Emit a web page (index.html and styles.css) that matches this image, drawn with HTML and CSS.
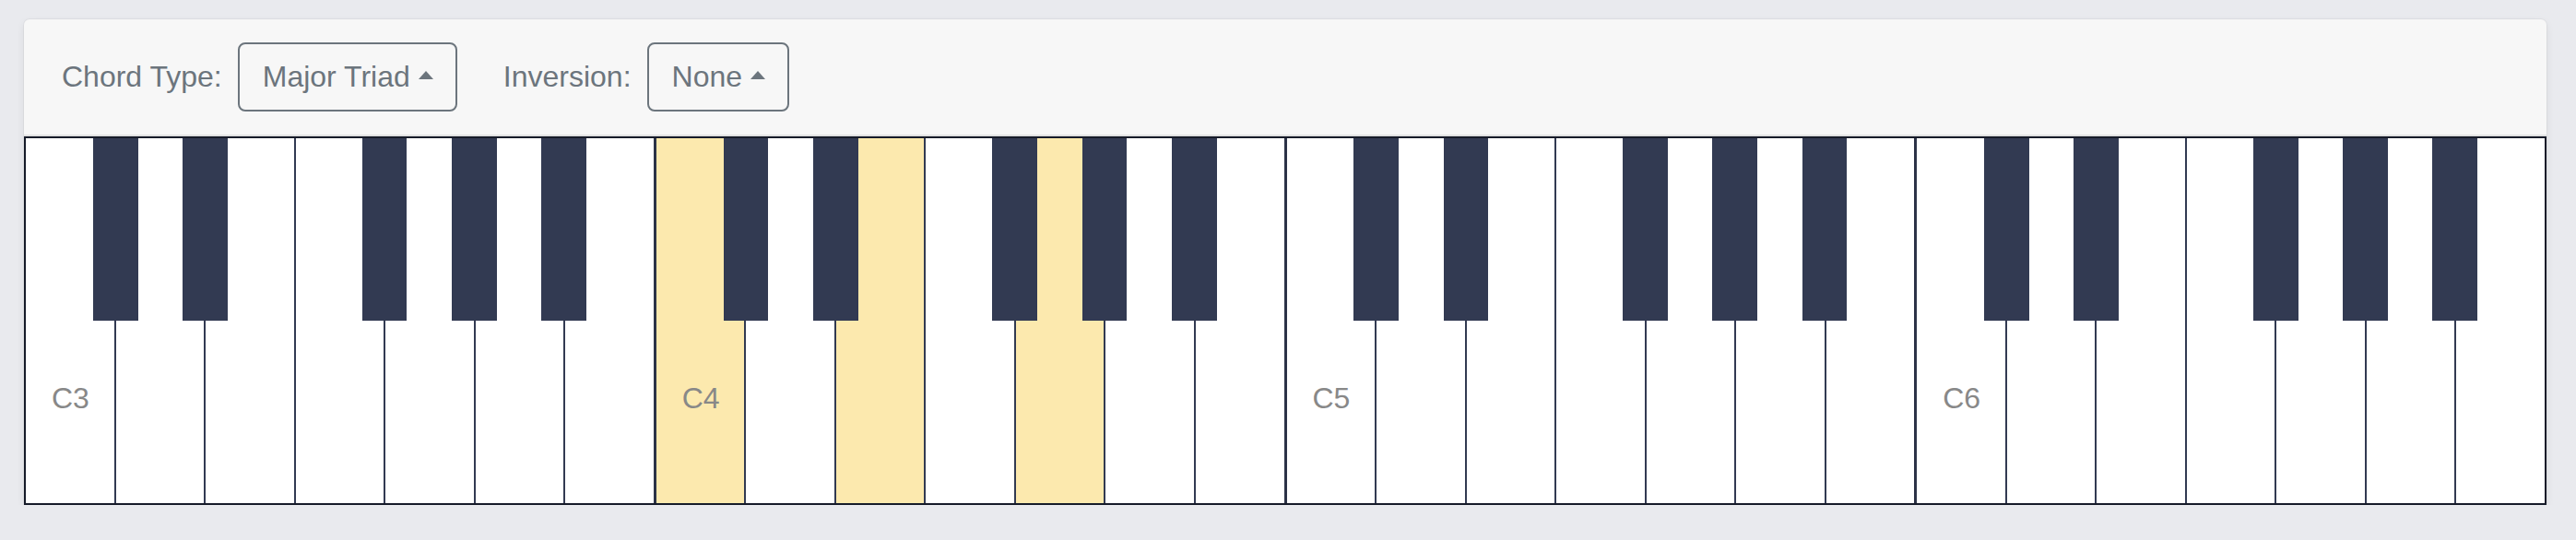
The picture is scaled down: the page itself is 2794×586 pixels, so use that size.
FILE: index.html
```html
<!DOCTYPE html>
<html lang="en">
<head>
<meta charset="utf-8">
<title>Chord Piano</title>
<link rel="stylesheet" href="styles.css">
</head>
<body>
<div class="card">
  <div class="toolbar">
    <span class="label">Chord Type:</span>
    <button class="select select-chord">Major Triad<span class="caret"></span></button>
    <span class="label label-gap">Inversion:</span>
    <button class="select">None<span class="caret"></span></button>
  </div>
  <div class="piano">
    <div class="octave">
      <div class="white"><span class="note">C3</span></div>
      <div class="white"></div>
      <div class="white"></div>
      <div class="white"></div>
      <div class="white"></div>
      <div class="white"></div>
      <div class="white"></div>
      <div class="black b1"></div><div class="black b2"></div><div class="black b4"></div><div class="black b5"></div><div class="black b6"></div>
    </div>
    <div class="octave">
      <div class="white on"><span class="note">C4</span></div>
      <div class="white"></div>
      <div class="white on"></div>
      <div class="white"></div>
      <div class="white on"></div>
      <div class="white"></div>
      <div class="white"></div>
      <div class="black b1"></div><div class="black b2"></div><div class="black b4"></div><div class="black b5"></div><div class="black b6"></div>
    </div>
    <div class="octave">
      <div class="white"><span class="note">C5</span></div>
      <div class="white"></div>
      <div class="white"></div>
      <div class="white"></div>
      <div class="white"></div>
      <div class="white"></div>
      <div class="white"></div>
      <div class="black b1"></div><div class="black b2"></div><div class="black b4"></div><div class="black b5"></div><div class="black b6"></div>
    </div>
    <div class="octave">
      <div class="white"><span class="note">C6</span></div>
      <div class="white"></div>
      <div class="white"></div>
      <div class="white"></div>
      <div class="white"></div>
      <div class="white"></div>
      <div class="white"></div>
      <div class="black b1"></div><div class="black b2"></div><div class="black b4"></div><div class="black b5"></div><div class="black b6"></div>
    </div>
  </div>
</div>
</body>
</html>
```
FILE: styles.css
```css
html, body {
  margin: 0;
  padding: 0;
  background: #e9eaee;
}
body {
  font-family: "Liberation Sans", Arial, sans-serif;
}
.card {
  margin: 21px 0 0 26px;
  width: 2736px;
  background: #f7f7f7;
  border-radius: 6px 6px 0 0;
  box-shadow: 0 0 0 1px rgba(0, 0, 0, 0.035), 0 3px 10px rgba(0, 0, 0, 0.07);
}
.toolbar {
  display: flex;
  align-items: center;
  padding: 25px 0 25px 41px;
  border-bottom: 2px solid #e1e1e1;
}
.label {
  font-size: 32px;
  color: #6c757d;
  margin-right: 17px;
}
.label-gap {
  margin-left: 50px;
}
.select {
  display: flex;
  align-items: center;
  gap: 9px;
  height: 75px;
  box-sizing: border-box;
  padding: 0 24px 0 25px;
  border: 2px solid #6c757d;
  border-radius: 8px;
  background: transparent;
  font-family: "Liberation Sans", Arial, sans-serif;
  font-size: 32px;
  color: #6c757d;
}
.caret {
  width: 0;
  height: 0;
  border-left: 8.5px solid transparent;
  border-right: 8.5px solid transparent;
  border-bottom: 9px solid #6c757d;
  margin-top: -4px;
}
.piano {
  display: flex;
  height: 400px;
  box-sizing: border-box;
  border: 2px solid #161b29;
  background: #fff;
}
.octave {
  flex: 1;
  display: flex;
  position: relative;
}
.octave + .octave {
  border-left: 3px solid #2c3347;
}
.white {
  flex: 1;
  display: flex;
  flex-direction: column;
  justify-content: flex-end;
  background: #fff;
}
.white + .white {
  border-left: 2px solid #323a52;
}
.white.on {
  background: #fce9ae;
}
.note {
  padding: 0 0 98px 28px;
  font-size: 32px;
  line-height: 32px;
  color: #888888;
}
.black {
  position: absolute;
  top: 0;
  height: 50%;
  width: 7.15%;
  background: #323a52;
  margin-left: -3.575%;
}
.b1 { left: 14.2857%; }
.b2 { left: 28.5714%; }
.b4 { left: 57.1429%; }
.b5 { left: 71.4286%; }
.b6 { left: 85.7143%; }
```
